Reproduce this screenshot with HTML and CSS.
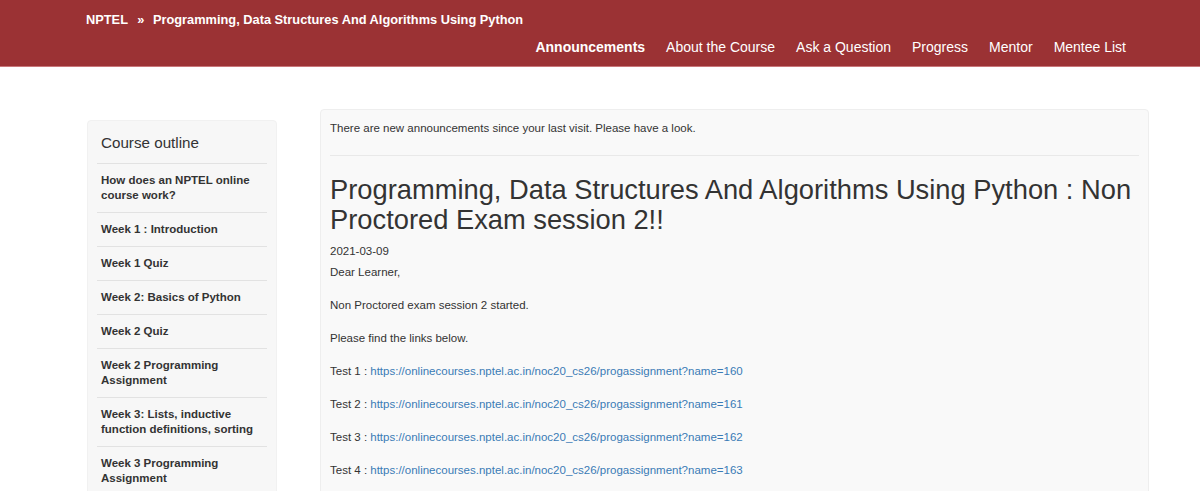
FILE: index.html
```html
<!DOCTYPE html>
<html lang="en">
<head>
    <meta charset="UTF-8">
    <title>NPTEL - Announcements</title>
    <link rel="stylesheet" href="styles.css">
</head>
<body>
<div class="header">
    <div class="crumbs">
        <a href="#">NPTEL</a>
        <span class="sep">&raquo;</span>
        <a href="#">Programming, Data Structures And Algorithms Using Python</a>
    </div>
    <ul class="nav">
        <li class="active"><a href="#">Announcements</a></li>
        <li><a href="#">About the Course</a></li>
        <li><a href="#">Ask a Question</a></li>
        <li><a href="#">Progress</a></li>
        <li><a href="#">Mentor</a></li>
        <li><a href="#">Mentee List</a></li>
    </ul>
</div>

<div class="page">
    <!--左侧课程目录-->
    <div class="outline">
        <div class="outline_title">Course outline</div>
        <ul class="outline_list">
            <li><a href="#">How does an NPTEL online course work?</a></li>
            <li><a href="#">Week 1 : Introduction</a></li>
            <li><a href="#">Week 1 Quiz</a></li>
            <li><a href="#">Week 2: Basics of Python</a></li>
            <li><a href="#">Week 2 Quiz</a></li>
            <li><a href="#">Week 2 Programming Assignment</a></li>
            <li><a href="#">Week 3: Lists, inductive function definitions, sorting</a></li>
            <li><a href="#">Week 3 Programming Assignment</a></li>
        </ul>
    </div>

    <!--公告内容-->
    <div class="content">
        <p class="notice">There are new announcements since your last visit. Please have a look.</p>
        <hr class="line">
        <h2 class="title">Programming, Data Structures And Algorithms Using Python : Non Proctored Exam session 2!!</h2>
        <p class="date">2021-03-09</p>
        <p>Dear Learner,</p>
        <p>Non Proctored exam session 2 started.</p>
        <p>Please find the links below.</p>
        <p>Test 1 : <a href="#">https://onlinecourses.nptel.ac.in/noc20_cs26/progassignment?name=160</a></p>
        <p>Test 2 : <a href="#">https://onlinecourses.nptel.ac.in/noc20_cs26/progassignment?name=161</a></p>
        <p>Test 3 : <a href="#">https://onlinecourses.nptel.ac.in/noc20_cs26/progassignment?name=162</a></p>
        <p>Test 4 : <a href="#">https://onlinecourses.nptel.ac.in/noc20_cs26/progassignment?name=163</a></p>
    </div>
</div>
</body>
</html>
```

FILE: styles.css
```css
*{
    margin: 0;
    padding: 0;
    list-style-type: none;
    box-sizing: border-box;
}
body{
    font-family: "Liberation Sans", Arial, sans-serif;
    font-size: 11.5px;
    color: #333;
    background: #fff;
}
a{
    text-decoration: none;
}
/*顶部导航*/
.header{
    height: 67px;
    background: #9b3234;
    border-bottom: 1px solid #c9777a;
    padding: 12px 74px 0 86px;
}
.crumbs{
    font-size: 12.8px;
    font-weight: bold;
    line-height: 16px;
    color: #fff;
}
.crumbs a{
    color: #fff;
}
.crumbs .sep{
    margin: 0 5px 0 6px;
}
.nav{
    display: flex;
    justify-content: flex-end;
    gap: 21px;
    margin-top: 11px;
}
.nav li a{
    font-size: 14px;
    line-height: 16px;
    color: #fff;
}
.nav li.active a{
    font-weight: bold;
}
/*主体*/
.page{
    display: flex;
    align-items: flex-start;
    padding: 42px 0 0 87px;
}
.outline{
    width: 190px;
    margin-top: 11px;
    background: #f7f7f7;
    border: 1px solid #f1f1f1;
    border-radius: 4px;
    padding: 0 9px;
}
.outline_title{
    font-size: 15.2px;
    line-height: 20px;
    padding: 12px 4px 10px;
    border-bottom: 1px solid #e2e2e2;
}
.outline_list li{
    padding: 9px 4px;
    border-bottom: 1px solid #e2e2e2;
    line-height: 15px;
    font-weight: bold;
}
.outline_list li a{
    color: #333;
}
.content{
    width: 829px;
    margin-left: 43px;
    min-height: 400px;
    background: #f9f9f9;
    border: 1px solid #eeeeee;
    border-radius: 4px;
    padding: 10px 9px 20px;
}
.content p{
    line-height: 17px;
    margin-bottom: 16px;
}
.content p.notice{
    margin-bottom: 0;
}
.content a{
    color: #3a7bb6;
}
.line{
    border: 0;
    border-top: 1px solid #e9e9e9;
    margin: 18px 0 0;
}
.title{
    font-size: 27.3px;
    font-weight: normal;
    line-height: 30px;
    color: #333;
    margin: 19px 0 8px;
}
.content p.date{
    margin-bottom: 4px;
}
.content p.greet{
    margin-bottom: 17px;
}
```
